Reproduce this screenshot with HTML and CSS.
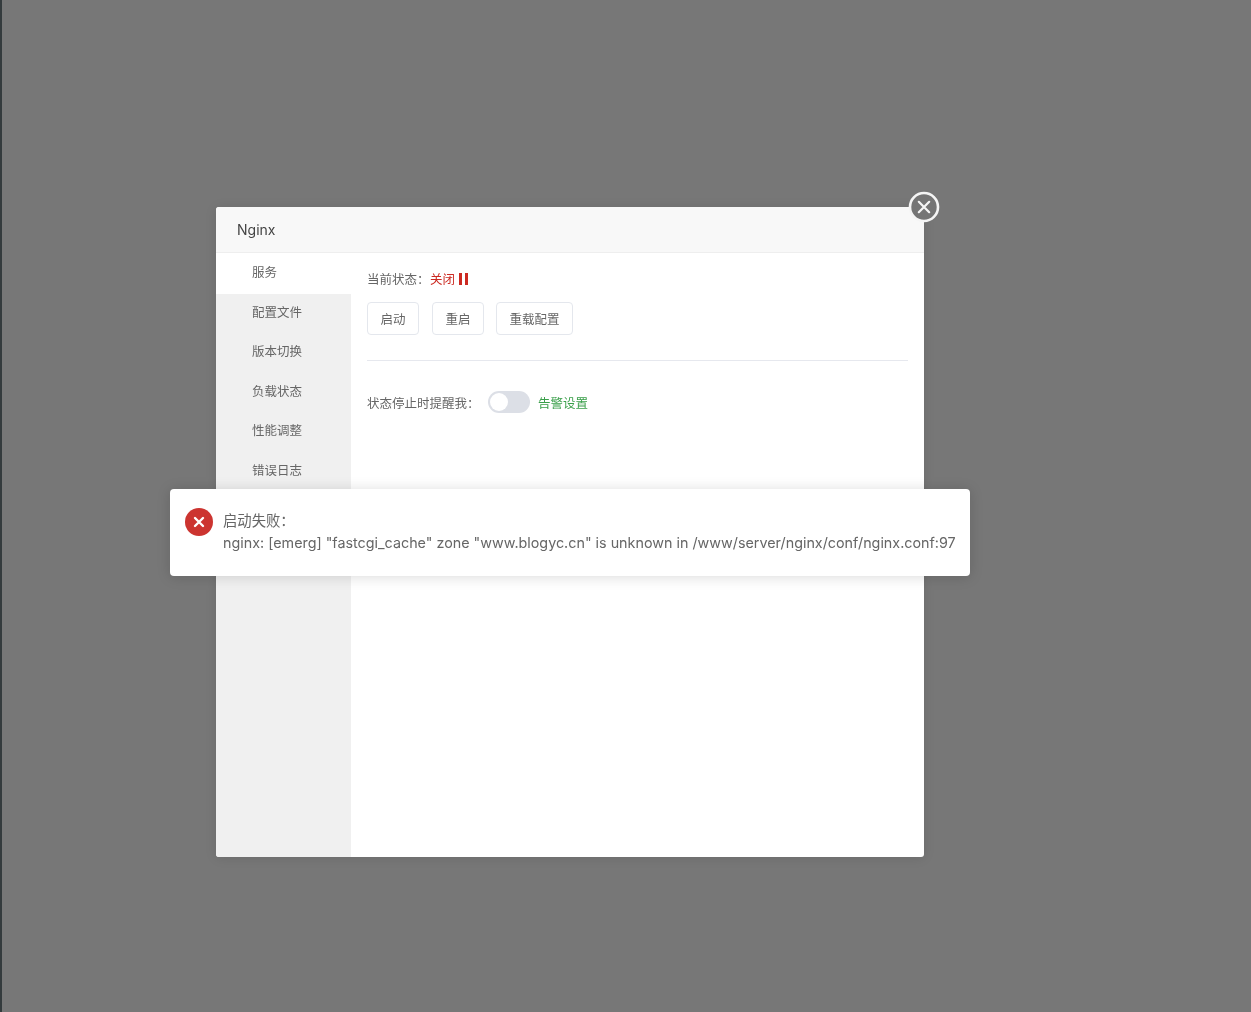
FILE: index.html
```html
<!DOCTYPE html>
<html>
  <head>
    <title>Nginx</title>
    <link rel="stylesheet" href="styles.css">
  </head>
  <body>
    <div class="sideStrip"></div>
    <div class="stage">
      <div class="dialog">
        <a class="closeBtn">
          <svg width="32" height="32" viewBox="0 0 32 32">
            <circle cx="16" cy="16" r="14" fill="#757575" stroke="#f5f5f5" stroke-width="2.600"/>
            <path d="M10.800 10.800L21.200 21.200M21.200 10.800L10.800 21.200" stroke="#f5f5f5" stroke-width="2.200" stroke-linecap="round"/>
          </svg>
        </a>
        <div class="dialogTitle">Nginx</div>
        <div class="dialogBody">
          <ul class="tabs">
            <li class="active">服务</li>
            <li>配置文件</li>
            <li>版本切换</li>
            <li>负载状态</li>
            <li>性能调整</li>
            <li>错误日志</li>
          </ul>
          <div class="panel">
            <div class="statusRow">
              <span class="statusLabel">当前状态：</span>
              <span class="stopped">关闭</span>
              <span class="pauseIcon"><i></i><i></i></span>
            </div>
            <div class="btnRow">
              <button>启动</button>
              <button>重启</button>
              <button>重载配置</button>
            </div>
            <div class="divider"></div>
            <div class="alertRow">
              <span class="alertLabel">状态停止时提醒我：</span>
              <span class="switch"><i></i></span>
              <a class="alertLink">告警设置</a>
            </div>
          </div>
        </div>
      </div>
      <div class="toast">
        <span class="toastIcon">
          <svg width="28" height="28" viewBox="0 0 28 28">
            <circle cx="14" cy="14" r="14" fill="#cc3430"/>
            <path d="M10 10L18 18M18 10L10 18" stroke="#fff" stroke-width="2.400" stroke-linecap="round"/>
          </svg>
        </span>
        <div class="toastText">
          <div>启动失败：</div>
          <div>nginx: [emerg] "fastcgi_cache" zone "www.blogyc.cn" is unknown in /www/server/nginx/conf/nginx.conf:97</div>
        </div>
      </div>
    </div>
  </body>
</html>
```

FILE: styles.css
```css
html, body { margin: 0; height: 100%; }
body { background: #777; font-family: Inter, "Noto Sans CJK SC", sans-serif; color: #666; overflow: hidden; display: flex; }

.sideStrip { width: 2px; height: 1012px; background: #343b3d; flex-shrink: 0; }
.stage { position: relative; flex: 1; padding: 207px 0 0 214px; filter: blur(0.4px); }

.dialog { position: relative; width: 708px; height: 650px; background: #fff; border-radius: 3px; display: flex; flex-direction: column; box-shadow: 0 1px 12px rgba(0,0,0,0.1); }
.closeBtn { position: absolute; right: -16px; top: -16px; width: 32px; height: 32px; }
.closeBtn svg { display: block; }

.dialogTitle { height: 45px; line-height: 45px; padding-left: 21px; background: #f8f8f8; border-bottom: 1px solid #eee; border-radius: 3px 3px 0 0; font-size: 14px; color: #444; }
.dialogBody { flex: 1; display: flex; min-height: 0; }

.tabs { list-style: none; margin: 0; padding: 0; width: 135px; background: #f0f0f0; border-radius: 0 0 0 3px; flex-shrink: 0; }
.tabs li { height: 39.600px; line-height: 40px; padding-left: 36px; font-size: 12.500px; color: #666; }
.tabs li.active { background: #fff; height: 41px; line-height: 40px; margin-bottom: -1.400px; }

.panel { flex: 1; padding: 16px 16px 0 16px; font-size: 12.500px; }
.statusRow { display: flex; align-items: center; height: 20px; margin-top: -1px; margin-bottom: 1px; }
.statusLabel { width: 63px; }
.stopped { color: #cc2a22; }
.pauseIcon { display: flex; gap: 3px; margin-left: 4px; margin-top: 2px; }
.pauseIcon i { display: block; width: 3px; height: 12px; background: #cc2a22; }

.btnRow { display: flex; gap: 13px; margin-top: 14px; }
.btnRow button { height: 33px; padding: 0 12.500px; background: #fff; border: 1px solid #e4e7ed; border-radius: 4px; font-family: inherit; font-size: 12.500px; color: #666; }
.btnRow button:last-child { margin-left: -1px; }

.divider { height: 1px; background: #e6e8ee; margin-top: 25px; }

.alertRow { display: flex; align-items: center; margin-top: 30px; height: 22px; }
.alertLabel { width: 121px; }
.switch { display: block; width: 42px; height: 22px; background: #dcdfe6; border-radius: 11px; }
.switch i { display: block; width: 18px; height: 18px; margin: 2px; background: #fff; border-radius: 50%; }
.alertLink { margin-left: 8px; color: #3a9f4a; }

.toast { position: absolute; left: 168px; top: 489px; width: 800px; height: 87px; box-sizing: border-box; padding-left: 15px; background: #fff; border-radius: 4px; display: flex; align-items: center; box-shadow: 0 1px 14px rgba(0,0,0,0.15); }
.toastIcon { width: 28px; height: 28px; margin-right: 10px; margin-top: -22px; }
.toastIcon svg { display: block; }
.toastText { font-size: 14.330px; line-height: 22px; color: #666; white-space: nowrap; margin-top: -1px; }
```
